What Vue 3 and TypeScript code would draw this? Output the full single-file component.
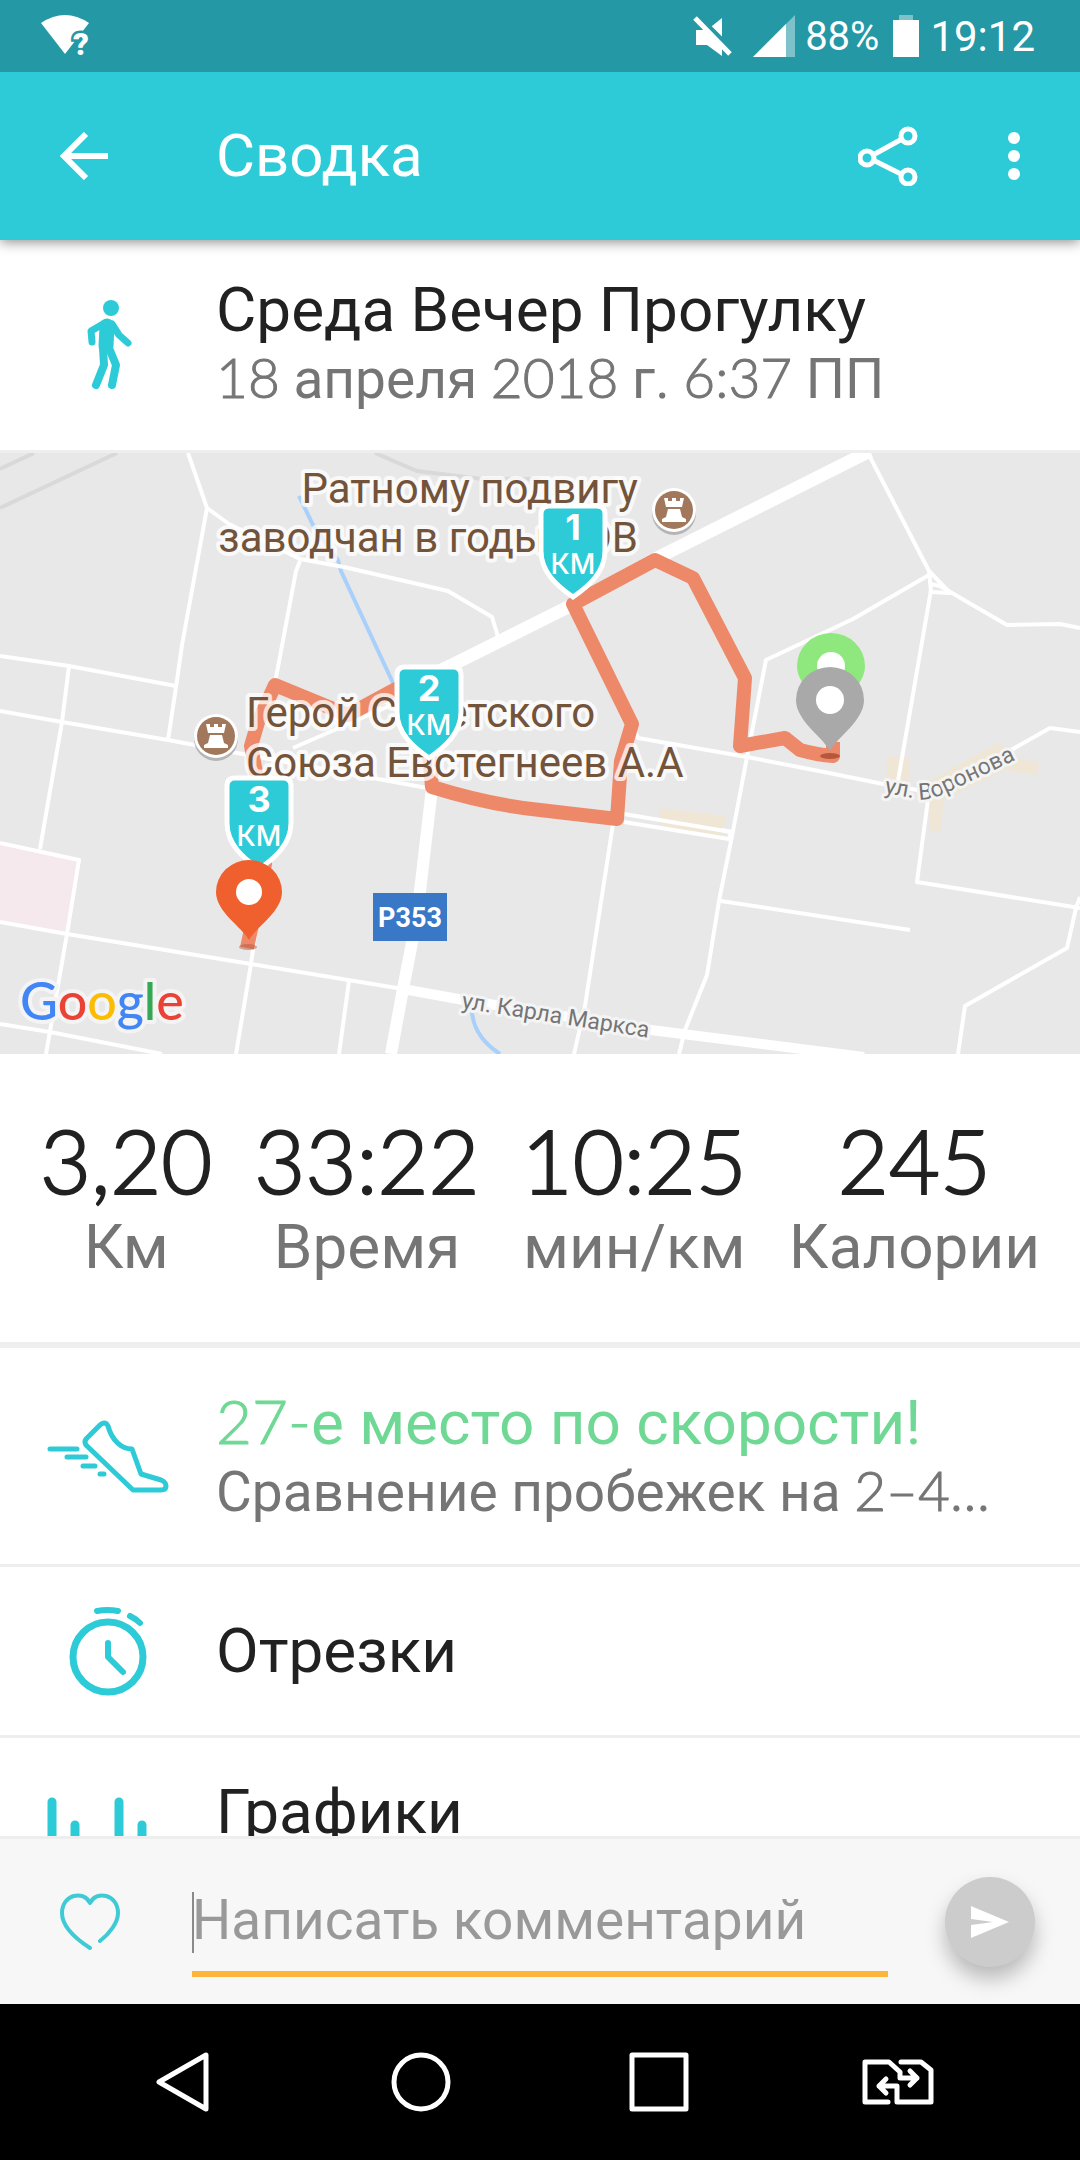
<script setup lang="ts">
interface Stat {
  value: string
  label: string
}

interface KmMark {
  n: number
  x: number
  y: number
}

const stats: Stat[] = [
  { value: '3,20', label: 'Км' },
  { value: '33:22', label: 'Время' },
  { value: '10:25', label: 'мин/км' },
  { value: '245', label: 'Калории' },
]

const marks: KmMark[] = [
  { n: 1, x: 573, y: 55 },
  { n: 2, x: 429, y: 216 },
  { n: 3, x: 259, y: 327 },
]

const castles = [
  { x: 674, y: 57 },
  { x: 216, y: 283 },
]

const streets: string[] = [
  'M188 0 207 55 229 71 300 106 344 114 448 138 492 164 498 184',
  'M207 55 182 192 176 234 168 287',
  'M300 108 296 118 275 230',
  'M0 203 69 213 176 233',
  'M69 213 62 269 40 396',
  'M0 258 62 269 168 287 248 302 427 335',
  'M293 295 396 250',
  'M0 390 79 407 67 481 46 601',
  'M0 469 67 481 251 511 403 536',
  'M0 571 50 579 162 601',
  'M265 411 251 511 236 601',
  'M349 528 339 601',
  'M868 0 929 118 950 140 931 139 929 118',
  'M929 122 853 166 766 207 747 304 733 378 719 448 707 522 685 577 679 601',
  'M931 131 940 133 1007 172 1060 171 1080 175',
  'M931 137 898 328',
  'M573 151 632 271 638 285 747 304 829 320 888 332 929 339 953 330 1050 275 1080 279',
  'M929 339 917 429 1080 455',
  'M1080 444 1076 455 1067 495 965 553 958 601',
  'M721 448 910 477',
  'M624 361 731 379',
  'M624 369 729 386 731 379 722 377',
  'M613 371 585 553 574 601',
]
</script>

<template>
  <div class="screen">
    <header class="status">
      <svg class="wifi" width="54" height="48" viewBox="0 0 54 48">
        <path d="M2 10Q26 -6 50 10L26 41Z" fill="#fff" />
        <text class="wifi-q" x="34" y="42">?</text>
      </svg>
      <div class="status-right">
        <svg width="40" height="42" viewBox="0 0 40 42">
          <path d="M3 15H14L29 3V41L14 30H3Z" fill="#fff" />
          <path d="M5 1 41 37" stroke="#2498a5" stroke-width="5" />
          <path d="M2 3 37 39" stroke="#fff" stroke-width="5" />
        </svg>
        <svg class="signal" width="42" height="42" viewBox="0 0 42 42">
          <path d="M42 0V42H0Z" fill="#7dc2ca" />
          <path d="M33 9V42H0Z" fill="#fff" />
        </svg>
        <span class="percent">88%</span>
        <svg class="battery" width="26" height="42" viewBox="0 0 26 42">
          <path d="M6 0H20V5H6Z" fill="#7dc2ca" />
          <path d="M0 5H26V42H0Z" fill="#fff" />
        </svg>
        <span class="time">19:12</span>
      </div>
    </header>

    <div class="appbar">
      <button class="plain back" type="button" aria-label="Назад">
        <svg width="48" height="48" viewBox="0 0 48 48" fill="none" stroke="#fff" stroke-width="6">
          <path d="M26 2 4 24 26 46M4 24H48" />
        </svg>
      </button>
      <h1>Сводка</h1>
      <button class="plain" type="button" aria-label="Поделиться">
        <svg width="60" height="60" viewBox="0 0 60 60" fill="none" stroke="#fff" stroke-width="5">
          <path d="M15 29 44 13M15 34 43 48" />
          <circle cx="9" cy="32" r="7" />
          <circle cx="50" cy="10" r="7" />
          <circle cx="50" cy="51" r="7" />
        </svg>
      </button>
      <button class="plain more" type="button" aria-label="Ещё">
        <svg width="12" height="48" viewBox="0 0 12 48" fill="#fff">
          <circle cx="6" cy="6" r="6" />
          <circle cx="6" cy="24" r="6" />
          <circle cx="6" cy="42" r="6" />
        </svg>
      </button>
    </div>

    <main>
      <section class="row head">
        <svg class="icon" viewBox="0 0 216 120" fill="none" stroke="#2dcbd7" stroke-linecap="round" stroke-linejoin="round">
          <circle cx="111" cy="25" r="8" fill="#2dcbd7" stroke="none" />
          <path d="M103 41 91 48 92 59" stroke-width="7" />
          <path d="M107 43 106 63" stroke-width="15" />
          <path d="M112 41 119 52 128 60" stroke-width="7" />
          <path d="M103 65 104 82 96 102" stroke-width="8" />
          <path d="M109 65 116 82 112 102" stroke-width="8" />
        </svg>
        <div class="text">
          <h2>Среда Вечер Прогулку</h2>
          <p><span class="num">18</span> апреля <span class="num">2018</span> г. <span class="num">6:37</span> ПП</p>
        </div>
      </section>

      <svg class="map" viewBox="0 0 1080 601">
        <rect width="1080" height="601" fill="#e8e8e8" />
        <path d="M0 390 79 407 67 480 0 469Z" fill="#f5e9ed" />
        <g fill="#efe6d5">
          <path d="M659 355 726 363 721 385 659 372Z" />
          <path d="M888 302 910 306 908 331 886 327Z" />
          <path d="M929 328 1000 289 1007 303 1039 310 1037 322 1005 317 953 342 944 347 940 379 929 377Z" />
        </g>
        <g fill="none" stroke="#d9d9d9" stroke-width="4">
          <path d="M0 16 34 0M0 55 117 0M375 0 417 18 482 26 540 26" />
        </g>
        <g fill="none" stroke="#a9d0fb" stroke-width="4">
          <path d="M299 43 313 72 338 107 341 118 393 230M472 559Q474 584 500 601" />
        </g>
        <g fill="none" stroke="#fff" stroke-width="4" stroke-linejoin="round">
          <path v-for="d in streets" :key="d" :d="d" />
        </g>
        <g fill="none" stroke="#fff" stroke-linejoin="round">
          <path d="M870 -2 655 106 574 151 458 209 429 223" stroke-width="13" />
          <path d="M432 335 417 464 403 536 391 601" stroke-width="12" />
          <path d="M403 536 458 546 643 576 864 604" stroke-width="10" />
        </g>
        <path
          class="route"
          d="M833 289 833 303Q818 302 800 297L785 285 740 293 745 225 693 125 655 107 573 151 632 271 621 308 617 366 540 357Q490 352 432 334L429 300 396 236 348 262 275 232 258 269 251 293 258 330 265 411 247 495"
        />

        <g class="place">
          <text x="638" y="50" text-anchor="end">Ратному подвигу</text>
          <text x="638" y="99" text-anchor="end">заводчан в годы ВОВ</text>
          <text x="246" y="274">Герой Советского</text>
          <text x="246" y="324">Союза Евстегнеев А.А</text>
        </g>
        <g class="street">
          <text transform="translate(461 555) rotate(9)">ул. Карла Маркса</text>
          <path id="voronova" d="M884 340 918 346Q930 348 946 340L1030 300" fill="none" stroke="none" />
          <text><textPath href="#voronova">ул. Воронова</textPath></text>
        </g>

        <g v-for="c in castles" :key="c.x" :transform="`translate(${c.x} ${c.y})`">
          <circle cy="3" r="22" fill="#b5b5b5" />
          <circle r="22" fill="#fff" />
          <circle r="19" fill="#a1785b" />
          <path d="M-10 -12H-6V-9H-2V-12H2V-9H6V-12H10L8 -3H-8ZM-6 -1H6L8 7 12 9V12H-12V9L-8 7Z" fill="#fff" />
        </g>

        <rect x="373" y="440" width="74" height="48" fill="#3878c7" />
        <text class="badge" x="410" y="474">P353</text>

        <text class="google" x="20" y="567">
          <tspan fill="#4285f4">G</tspan><tspan fill="#ea4335">o</tspan><tspan fill="#fbbc05">o</tspan><tspan fill="#4285f4">g</tspan><tspan fill="#34a853">l</tspan><tspan fill="#ea4335">e</tspan>
        </text>

        <g v-for="m in marks" :key="m.n" :transform="`translate(${m.x} ${m.y})`">
          <path d="M-24 -2H24Q32 -2 32 6V43C32 64 16 78 0 89C-16 78 -32 64 -32 43V6Q-32 -2 -24 -2Z" fill="#2dcbd7" stroke="#fff" stroke-width="5" />
          <text class="mark-n" y="32">{{ m.n }}</text>
          <text class="mark-km" y="66">КМ</text>
        </g>

        <g transform="translate(831 180)">
          <path d="M0 84C-7 70 -34 54 -34 33A34 33 0 0 1 34 33C34 54 7 70 0 84Z" fill="#8ee87e" />
          <circle cy="33" r="14" fill="#fff" />
        </g>
        <ellipse cx="830" cy="303" rx="10" ry="3" fill="#b5573d" />
        <g transform="translate(830 214)">
          <path d="M0 84C-7 70 -34 54 -34 33A34 33 0 0 1 34 33C34 54 7 70 0 84Z" fill="#a9a9a9" />
          <circle cy="33" r="14" fill="#fff" />
        </g>
        <ellipse cx="248" cy="494" rx="9" ry="3" fill="#b5573d" opacity="0.5" />
        <g transform="translate(249 407)">
          <path d="M0 80C-7 67 -33 52 -33 32A33 32 0 0 1 33 32C33 52 7 67 0 80Z" fill="#f0602f" />
          <circle cy="32" r="13" fill="#fff" />
        </g>
      </svg>

      <dl class="stats">
        <div v-for="s in stats" :key="s.label">
          <dd>{{ s.value }}</dd>
          <dt>{{ s.label }}</dt>
        </div>
      </dl>

      <section class="row">
        <svg class="icon" viewBox="0 0 216 120" fill="none" stroke="#2dcbd7" stroke-width="5" stroke-linecap="round" stroke-linejoin="round">
          <path d="M50 53H77M67 61H86M83 70H95M100 78H104" />
          <path d="M86 43 99 30Q105 24 108 30C112 45 122 53 132 53L141 78 161 84Q166 86 166 90Q166 94 161 94H133L86 49Q84 46 86 43Z" />
        </svg>
        <div class="text">
          <h2 class="green"><span class="num">27-</span>е место по скорости!</h2>
          <p>Сравнение пробежек на <span class="num">2–4…</span></p>
        </div>
      </section>

      <section class="row short">
        <svg class="icon" viewBox="0 0 216 120" fill="none" stroke="#2dcbd7" stroke-width="6" stroke-linecap="round" stroke-linejoin="round">
          <circle cx="108" cy="66" r="35" stroke-width="7" />
          <path d="M97 20Q107 18 118 20M130 25Q136 28 140 32M108 52V66L123 81" />
        </svg>
        <div class="text"><h2>Отрезки</h2></div>
      </section>

      <section class="row top">
        <svg class="icon" viewBox="0 0 216 120" fill="none" stroke="#2dcbd7" stroke-width="9" stroke-linecap="round">
          <path d="M52 16V104M75 39V104M119 16V104M142 39V104" />
        </svg>
        <div class="text"><h2>Графики</h2></div>
      </section>
    </main>

    <form class="comment" @submit.prevent>
      <button class="plain like" type="button" aria-label="Нравится">
        <svg width="62" height="58" viewBox="0 0 62 58" fill="none" stroke="#3fcad5" stroke-width="4" stroke-linecap="round" stroke-linejoin="round">
          <path d="M31 55C17 46 3 34 3 20C3 1 25 -3 31 10C37 -3 59 1 59 20C59 30 50 41 41 48" />
        </svg>
      </button>
      <label class="field">
        <input type="text" placeholder="Написать комментарий" aria-label="Написать комментарий" />
      </label>
      <button class="send" type="submit" aria-label="Отправить">
        <svg width="38" height="34" viewBox="0 0 38 34" fill="#fff">
          <path d="M0 1 38 17 0 33V20L22 17 0 14Z" />
        </svg>
      </button>
    </form>

    <nav>
      <button class="plain" type="button" aria-label="Назад">
        <svg width="60" height="60" viewBox="0 0 60 60"><path d="M7 30 54 3V57Z" /></svg>
      </button>
      <button class="plain" type="button" aria-label="Домой">
        <svg width="60" height="60" viewBox="0 0 60 60"><circle cx="30" cy="30" r="27" /></svg>
      </button>
      <button class="plain" type="button" aria-label="Обзор">
        <svg width="60" height="60" viewBox="0 0 60 60"><path d="M3 3H57V57H3Z" /></svg>
      </button>
      <button class="plain" type="button" aria-label="Сменить SIM">
        <svg width="74" height="60" viewBox="0 0 74 60">
          <path d="M27 50H4V10H28L39 20V26H56M49 19 56 26 49 33" />
          <path d="M40 10H60L70 18V50H36V34H18M25 27 18 34 25 41" />
        </svg>
      </button>
    </nav>
  </div>
</template>

<style>
body {
  margin: 0;
}
</style>

<style scoped>
.screen {
  display: flex;
  flex-direction: column;
  height: 100vh;
  background: #fff;
  color: #212121;
  font-family: Roboto, "Noto Sans", sans-serif;
}

h1,
h2,
p,
dl,
dd {
  margin: 0;
  font-weight: 400;
}

svg {
  display: block;
  flex: none;
}

.plain {
  display: flex;
  align-items: center;
  justify-content: center;
  padding: 0;
  border: 0;
  background: none;
}

.status {
  position: relative;
  z-index: 2;
  display: flex;
  flex: none;
  justify-content: space-between;
  height: 72px;
  padding: 0 45px 0 39px;
  background: #2498a5;
  color: #fff;
}

.wifi {
  margin-top: 13px;
  overflow: visible;
}

.wifi-q {
  fill: #fff;
  stroke: #2498a5;
  stroke-width: 5px;
  paint-order: stroke;
  font-size: 31px;
  font-weight: 900;
}

.status-right {
  display: flex;
  align-items: center;
}

.signal {
  margin: 0 10px 0 20px;
}

.percent {
  font-size: 40px;
}

.battery {
  margin: 0 11px 0 14px;
}

.time {
  font-size: 42px;
}

.appbar {
  position: relative;
  z-index: 1;
  display: flex;
  flex: none;
  align-items: center;
  height: 168px;
  padding: 0 60px;
  background: #2dcbd7;
  box-shadow: 0 2px 12px rgba(0, 0, 0, 0.45);
  color: #fff;
}

.back {
  width: 156px;
  justify-content: flex-start;
}

h1 {
  flex: 1;
  font-size: 60px;
  line-height: 72px;
}

.more {
  margin-left: 90px;
}

main {
  flex: 1;
  min-height: 0;
  overflow: hidden;
}

.row {
  display: flex;
  align-items: center;
  min-height: 216px;
  border-bottom: 3px solid #eee;
}

.row.head {
  min-height: 206px;
  padding-bottom: 4px;
}

.row.short {
  min-height: 168px;
}

.row.top .text {
  align-self: flex-start;
  padding-top: 38px;
}

.icon {
  width: 216px;
  height: 120px;
}

.text {
  flex: 1;
  min-width: 0;
  white-space: nowrap;
}

h2 {
  font-size: 62px;
  line-height: 72px;
}

p {
  color: #757575;
  font-size: 55px;
  line-height: 66px;
}

.num {
  font-family: Lato, Roboto, sans-serif;
  font-weight: 300;
  line-height: 1;
  -webkit-text-stroke: 1px currentColor;
}

.green {
  color: #6fd895;
}

.map {
  width: 100%;
  height: auto;
}

.route {
  fill: none;
  stroke: #ed8868;
  stroke-width: 14px;
  stroke-linejoin: round;
}

.place {
  fill: #73533a;
  stroke: rgba(255, 255, 255, 0.75);
  stroke-width: 8px;
  stroke-linejoin: round;
  paint-order: stroke;
  font-size: 42px;
}

.street {
  fill: #757575;
  stroke: #f4f4f4;
  stroke-width: 6px;
  stroke-linejoin: round;
  paint-order: stroke;
  font-size: 23px;
}

.badge {
  fill: #fff;
  font-size: 27px;
  font-weight: 700;
  text-anchor: middle;
}

.google {
  stroke: #f4f4f4;
  stroke-width: 8px;
  stroke-linejoin: round;
  paint-order: stroke;
  font-family: Lato, sans-serif;
  font-size: 52px;
  font-weight: 500;
}

.mark-n,
.mark-km {
  fill: #fff;
  font-family: Inter, sans-serif;
  text-anchor: middle;
}

.mark-n {
  font-size: 36px;
  font-weight: 700;
}

.mark-km {
  font-size: 28px;
  font-weight: 500;
}

.stats {
  display: flex;
  justify-content: space-between;
  padding: 56px 40px 58px;
  border-bottom: 6px solid #eee;
  text-align: center;
}

.stats dd {
  font-family: Lato, Roboto, sans-serif;
  font-size: 88px;
  font-weight: 300;
  line-height: 100px;
  -webkit-text-stroke: 2px currentColor;
}

.stats dt {
  color: #757575;
  font-size: 62px;
  line-height: 74px;
}

.comment {
  display: flex;
  flex: none;
  align-items: center;
  height: 165px;
  border-top: 3px solid #eee;
  box-sizing: border-box;
  min-height: 168px;
  background: #f7f7f7;
}

.like {
  width: 180px;
}

.field {
  position: relative;
  flex: 1;
  margin: 0 12px;
  padding: 12px 0 0;
  border-bottom: 6px solid #fdb53a;
}

.field::before {
  content: "";
  position: absolute;
  top: 25px;
  left: 0;
  width: 2px;
  height: 61px;
  background: #8a8a8a;
}

.field input {
  width: 100%;
  height: 92px;
  padding: 0 0 10px;
  border: 0;
  outline: 0;
  background: none;
  box-sizing: border-box;
  font-family: inherit;
  font-size: 55px;
}

.field input::placeholder {
  color: #999;
  opacity: 1;
}

.send {
  display: flex;
  align-items: center;
  justify-content: center;
  width: 90px;
  height: 90px;
  margin: 0 45px;
  padding: 0;
  border: 0;
  border-radius: 50%;
  background: #ccc;
  box-shadow: 0 12px 20px rgba(0, 0, 0, 0.25);
}

nav {
  display: grid;
  flex: none;
  grid-template-columns: repeat(4, 1fr);
  height: 156px;
  padding: 0 63px;
  background: #000;
}

nav svg {
  fill: none;
  stroke: #fff;
  stroke-width: 5px;
  stroke-linecap: round;
  stroke-linejoin: round;
}
</style>
